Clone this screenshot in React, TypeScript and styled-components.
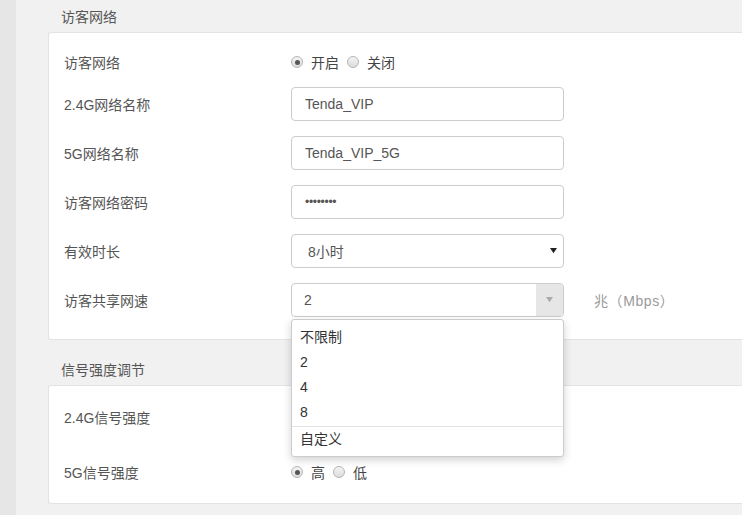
import React from "react";
import styled, { createGlobalStyle } from "styled-components";

const GlobalStyle = createGlobalStyle`
  html, body {
    margin: 0;
    padding: 0;
    background: #f1f1f1;
    overflow: hidden;
  }
  body {
    font-family: "Liberation Sans", Arial, "Noto Sans CJK SC", sans-serif;
    font-size: 14px;
    color: #555;
  }
`;

const Page = styled.div`
  display: flex;
  width: 742px;
  height: 515px;
  overflow: hidden;
`;

const SideStrip = styled.div`
  width: 16px;
  flex-shrink: 0;
  background: #e6e6e6;
`;

const Main = styled.div`
  flex: 1;
  padding: 3px 0 0 32px;
  min-width: 0;
`;

const SectionTitle = styled.div<{ $first?: boolean }>`
  height: 29px;
  line-height: 29px;
  padding-left: 13px;
  margin-top: ${(p) => (p.$first ? "0" : "16px")};
  color: #555;
`;

const Card = styled.div<{ $pt: number; $pb: number }>`
  background: #fff;
  border: 1px solid #e3e3e3;
  border-right: none;
  border-radius: 3px 0 0 3px;
  margin-right: -10px;
  padding: ${(p) => p.$pt}px 0 ${(p) => p.$pb}px 15px;
`;

const Row = styled.div<{ $gap: number }>`
  display: flex;
  align-items: center;
  min-height: 20px;
  margin-bottom: ${(p) => p.$gap}px;
  &:last-child {
    margin-bottom: 0;
  }
`;

const Label = styled.div`
  width: 227px;
  flex-shrink: 0;
  color: #555;
`;

const RadioGroup = styled.div`
  display: flex;
  align-items: center;
  height: 20px;
`;

const RadioItem = styled.label`
  display: flex;
  align-items: center;
  margin-right: 8px;
  color: #444;
`;

const RadioDot = styled.span<{ $on?: boolean }>`
  position: relative;
  width: 10px;
  height: 10px;
  border-radius: 50%;
  border: 1px solid #b5b5b5;
  background: linear-gradient(#f4f4f4, #dcdcdc);
  margin-right: 8px;
  &::after {
    content: "";
    display: ${(p) => (p.$on ? "block" : "none")};
    position: absolute;
    left: 2.5px;
    top: 2.5px;
    width: 5px;
    height: 5px;
    border-radius: 50%;
    background: #555;
  }
`;

const Field = styled.div`
  box-sizing: border-box;
  width: 273px;
  height: 34px;
  border: 1px solid #ccc;
  border-radius: 4px;
  background: #fff;
  display: flex;
  align-items: center;
  padding-left: 13px;
  color: #555;
`;

const Password = styled.span`
  font-size: 12px;
  letter-spacing: -0.3px;
  color: #555;
`;

const SelectBox = styled(Field)`
  justify-content: space-between;
  padding: 0 6px 0 16px;
`;

const ComboWrap = styled.div`
  position: relative;
`;

const Combo = styled(Field)`
  padding: 0 0 0 12px;
  overflow: hidden;
`;

const ComboText = styled.span`
  flex: 1;
`;

const ComboButton = styled.div`
  width: 27px;
  height: 100%;
  background: #e6e6e6;
  display: flex;
  align-items: center;
  justify-content: center;
`;

const Unit = styled.span`
  margin-left: 30px;
  color: #999;
  letter-spacing: 0.6px;
`;

const Menu = styled.div`
  position: absolute;
  left: 0;
  top: 36px;
  z-index: 10;
  box-sizing: border-box;
  width: 273px;
  background: #fff;
  border: 1px solid #ccc;
  border-radius: 3px;
  box-shadow: 0 3px 8px rgba(0, 0, 0, 0.18);
  padding: 5px 0 4px;
`;

const MenuItem = styled.div<{ $divider?: boolean }>`
  height: 25px;
  line-height: 25px;
  padding-left: 8px;
  color: #333;
  border-top: ${(p) => (p.$divider ? "1px solid #e3e3e3" : "none")};
  margin-top: ${(p) => (p.$divider ? "1px" : "0")};
`;

const Radios = ({ a, b }: { a: string; b: string }) => (
  <RadioGroup>
    <RadioItem>
      <RadioDot $on />
      {a}
    </RadioItem>
    <RadioItem>
      <RadioDot />
      {b}
    </RadioItem>
  </RadioGroup>
);

const Caret = ({ color, w }: { color: string; w: number }) => (
  <svg width={w} height={w * 0.75} viewBox="0 0 8 6">
    <path d="M0 0 L8 0 L4 6 Z" fill={color} />
  </svg>
);

export default function App() {
  return (
    <Page>
      <GlobalStyle />
      <SideStrip />
      <Main>
        <SectionTitle $first>访客网络</SectionTitle>
        <Card $pt={19} $pb={22}>
          <Row $gap={15}>
            <Label>访客网络</Label>
            <Radios a="开启" b="关闭" />
          </Row>
          <Row $gap={15}>
            <Label>2.4G网络名称</Label>
            <Field>Tenda_VIP</Field>
          </Row>
          <Row $gap={15}>
            <Label>5G网络名称</Label>
            <Field>Tenda_VIP_5G</Field>
          </Row>
          <Row $gap={15}>
            <Label>访客网络密码</Label>
            <Field>
              <Password>••••••••</Password>
            </Field>
          </Row>
          <Row $gap={15}>
            <Label>有效时长</Label>
            <SelectBox>
              <span>8小时</span>
              <Caret color="#222" w={7} />
            </SelectBox>
          </Row>
          <Row $gap={15}>
            <Label>访客共享网速</Label>
            <ComboWrap>
              <Combo>
                <ComboText>2</ComboText>
                <ComboButton>
                  <Caret color="#aaa" w={7} />
                </ComboButton>
              </Combo>
              <Menu>
                <MenuItem>不限制</MenuItem>
                <MenuItem>2</MenuItem>
                <MenuItem>4</MenuItem>
                <MenuItem>8</MenuItem>
                <MenuItem $divider>自定义</MenuItem>
              </Menu>
            </ComboWrap>
            <Unit>兆（Mbps）</Unit>
          </Row>
        </Card>
        <SectionTitle>信号强度调节</SectionTitle>
        <Card $pt={21} $pb={21}>
          <Row $gap={35}>
            <Label>2.4G信号强度</Label>
            <Radios a="高" b="低" />
          </Row>
          <Row $gap={35}>
            <Label>5G信号强度</Label>
            <Radios a="高" b="低" />
          </Row>
        </Card>
      </Main>
    </Page>
  );
}
